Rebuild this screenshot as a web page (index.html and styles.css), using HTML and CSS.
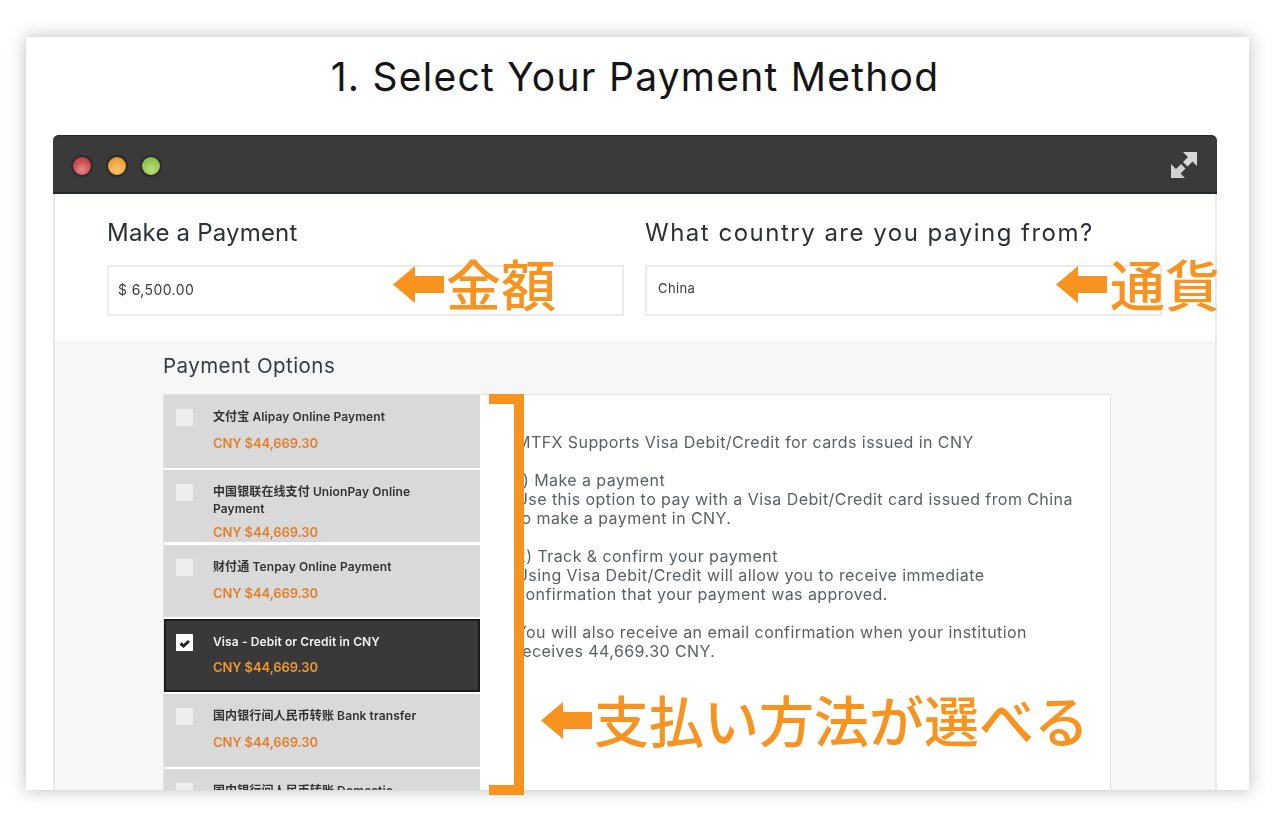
FILE: index.html
```html
<!DOCTYPE html>
<html lang="ja">
<head>
<meta charset="utf-8">
<title>1. Select Your Payment Method</title>
<link rel="stylesheet" href="styles.css">
</head>
<body>
<div class="stage">
  <main class="card">
    <h1 class="title">1. Select Your Payment Method</h1>
    <section class="window">
      <header class="titlebar">
        <div class="lights">
          <span class="light red"></span>
          <span class="light amber"></span>
          <span class="light green"></span>
        </div>
        <svg class="expand" viewBox="0 0 28 28" width="28" height="28" aria-hidden="true">
          <path fill="#d8d8d8" d="M13 1h14v14l-4.500-4.500-5 5-4.500-4.500 5-5z"/>
          <path fill="#cfd1d1" d="M1 13v14h14l-4.500-4.500 5-5-4.500-4.500-5 5z"/>
        </svg>
      </header>
      <div class="form-row">
        <div class="field">
          <label class="field-label">Make a Payment</label>
          <div class="input amount">$ 6,500.00</div>
        </div>
        <div class="field">
          <label class="field-label wide">What country are you paying from?</label>
          <div class="input country">China</div>
        </div>
      </div>
      <div class="options">
        <h2 class="options-title">Payment Options</h2>
        <div class="options-panel">
          <ul class="methods">
            <li class="method">
              <span class="check"></span>
              <div class="method-text"><p class="name">文付宝 Alipay Online Payment</p><p class="price">CNY $44,669.30</p></div>
            </li>
            <li class="method tight">
              <span class="check"></span>
              <div class="method-text"><p class="name">中国银联在线支付 UnionPay Online<br>Payment</p><p class="price">CNY $44,669.30</p></div>
            </li>
            <li class="method">
              <span class="check"></span>
              <div class="method-text"><p class="name">财付通 Tenpay Online Payment</p><p class="price">CNY $44,669.30</p></div>
            </li>
            <li class="method selected">
              <span class="check">
                <svg viewBox="0 0 16 16" width="16" height="16" aria-hidden="true"><path fill="none" stroke="#222" stroke-width="3" d="M3.500 8.500l3 2.500 5.500-5"/></svg>
              </span>
              <div class="method-text"><p class="name">Visa - Debit or Credit in CNY</p><p class="price">CNY $44,669.30</p></div>
            </li>
            <li class="method">
              <span class="check"></span>
              <div class="method-text"><p class="name">国内银行间人民币转账 Bank transfer</p><p class="price">CNY $44,669.30</p></div>
            </li>
            <li class="method">
              <span class="check"></span>
              <div class="method-text"><p class="name">国内银行间人民币转账 Domestic</p></div>
            </li>
          </ul>
          <div class="details">
            <p>MTFX Supports Visa Debit/Credit for cards issued in CNY</p>
            <p>1) Make a payment<br>Use this option to pay with a Visa Debit/Credit card issued from China<br>to make a payment in CNY.</p>
            <p>2) Track &amp; confirm your payment<br>Using Visa Debit/Credit will allow you to receive immediate<br>confirmation that your payment was approved.</p>
            <p>You will also receive an email confirmation when your institution<br>receives 44,669.30 CNY.</p>
          </div>
        </div>
      </div>
    </section>
  </main>

  <div class="note note-amount">
    <svg class="arrow" viewBox="0 0 51 37" width="51" height="37" aria-hidden="true"><path d="M0 18.500 22 0v10h29v17H22v10z"/></svg>
    <span>金額</span>
  </div>
  <div class="note note-currency">
    <svg class="arrow" viewBox="0 0 51 37" width="51" height="37" aria-hidden="true"><path d="M0 18.500 22 0v10h29v17H22v10z"/></svg>
    <span>通貨</span>
  </div>
  <div class="note note-methods">
    <svg class="arrow" viewBox="0 0 51 37" width="51" height="37" aria-hidden="true"><path d="M0 18.500 22 0v10h29v17H22v10z"/></svg>
    <span>支払い方法が選べる</span>
  </div>
  <div class="bracket"></div>
</div>
</body>
</html>
```
FILE: styles.css
```css
* { box-sizing: border-box; }
html, body { margin: 0; padding: 0; background: #fff; }
body { font-family: "Inter", "Noto Sans CJK SC", sans-serif; color: #222; }
p, ul, h1, h2 { margin: 0; padding: 0; }

.stage { position: relative; width: 1280px; height: 821px; overflow: hidden; padding: 37px 31px 31px 26px; }

.card {
  height: 753px;
  overflow: hidden;
  background: #fff;
  padding: 0 32px 0 27px;
  box-shadow: 0 0 16px rgba(90, 95, 100, .42);
}

.title {
  height: 98px;
  padding-top: 13px;
  text-align: center;
  font-size: 39px;
  line-height: 54px;
  font-weight: 400;
  letter-spacing: 1.25px;
  color: #151515;
}

.window { height: 700px; filter: blur(.35px); }

.titlebar {
  height: 59px;
  display: flex;
  align-items: center;
  justify-content: space-between;
  padding: 0 19px 0 18px;
  background: #3a3a3a;
  border-bottom: 2px solid #25282a;
  border-radius: 6px 6px 0 0;
  box-shadow: inset 0 1px 0 #292929;
}
.lights { display: flex; gap: 12.500px; margin-top: 4px; }
.light { width: 22px; height: 22px; border-radius: 50%; border: 2px solid #2b2b2b; }
.red { background: radial-gradient(circle at 50% 70%, #ea8c8c, #c9474c 60%, #a93a3e); }
.amber { background: radial-gradient(circle at 50% 70%, #fbc76e, #efa33b 60%, #cf8a2e); }
.green { background: radial-gradient(circle at 50% 70%, #b8de78, #93c651 60%, #7fae44); }
.expand { display: block; margin-top: 2px; }

.form-row {
  height: 148px;
  display: grid;
  grid-template-columns: 517px 517px;
  column-gap: 21px;
  padding: 25px 0 0 52px;
  border-left: 2px solid #e8e8e8;
  border-right: 2px solid #e8e8e8;
  background: #fff;
}
.field-label { display: block; font-size: 24px; line-height: 28px; letter-spacing: .2px; color: #2b3036; }
.field-label.wide { letter-spacing: 1.5px; }
.input {
  height: 51px;
  margin-top: 18px;
  padding-left: 9px;
  border: 2px solid #ebebeb;
  font-size: 14px;
  line-height: 45px;
  letter-spacing: .4px;
  color: #3a3a3a;
}
.input.country { padding-left: 11px; font-size: 13px; line-height: 43px; }

.options {
  height: 500px;
  padding: 8px 104px 0 108px;
  background: #f7f7f7;
  border-top: 1px solid #eeeeee;
  border-left: 2px solid #e8e8e8;
  border-right: 2px solid #e8e8e8;
}
.options-title { font-size: 20.500px; line-height: 30px; font-weight: 400; letter-spacing: .45px; color: #333a40; }
.options-panel {
  height: 470px;
  margin-top: 13px;
  display: flex;
  background: #fff;
  border: 1px solid #e2e2e2;
}

.methods { width: 316px; list-style: none; flex: none; }
.method {
  height: 72.500px;
  margin-bottom: 2.300px;
  padding: 13px 12px 0 12px;
  display: flex;
  gap: 20px;
  background: #d9d9d9;
  overflow: hidden;
}
.method-text { flex: 1; }
.check {
  flex: none;
  width: 17px;
  height: 17px;
  margin-top: 1px;
  background: #eeeeee;
  display: flex;
  align-items: center;
  justify-content: center;
}
.name {
  font-size: 12px;
  line-height: 17px;
  font-weight: 600;
  letter-spacing: .1px;
  color: #333;
}
.price {
  margin-top: 10px;
  font-size: 13px;
  line-height: 17px;
  font-weight: 600;
  letter-spacing: -.1px;
  color: #e37f2b;
}
.method.tight .price { margin-top: 7px; }
.selected { background: #393939; border: 2px solid #1b1b1b; padding: 12px 10px 0 10px; }
.selected .check { background: #fff; }
.selected .name { color: #f4f4f4; }
.selected .price { margin-top: 9px; color: #f0962e; }

.details {
  flex: 1;
  padding: 38px 20px 0 36px;
  font-size: 16px;
  line-height: 19px;
  letter-spacing: .43px;
  color: #5a5f63;
}
.details p { margin-bottom: 19px; }

/* Orange callouts drawn on top of the screenshot */
.note {
  position: absolute;
  display: flex;
  align-items: center;
  gap: 2px;
  color: #f7931e;
  font-family: "Noto Sans CJK JP", sans-serif;
  font-weight: 500;
  font-size: 55px;
  line-height: 60px;
  white-space: nowrap;
}
.note span { margin-bottom: 4px; }
.arrow { fill: #f7931e; flex: none; }
.note-amount { left: 393px; top: 252px; }
.note-currency { left: 1056px; top: 252px; gap: 3px; }
.note-methods { left: 541px; top: 688px; }

.bracket {
  position: absolute;
  left: 489px;
  top: 394px;
  width: 35px;
  height: 401px;
  border: 10px solid #f7931e;
  border-left: 0;
}
```
